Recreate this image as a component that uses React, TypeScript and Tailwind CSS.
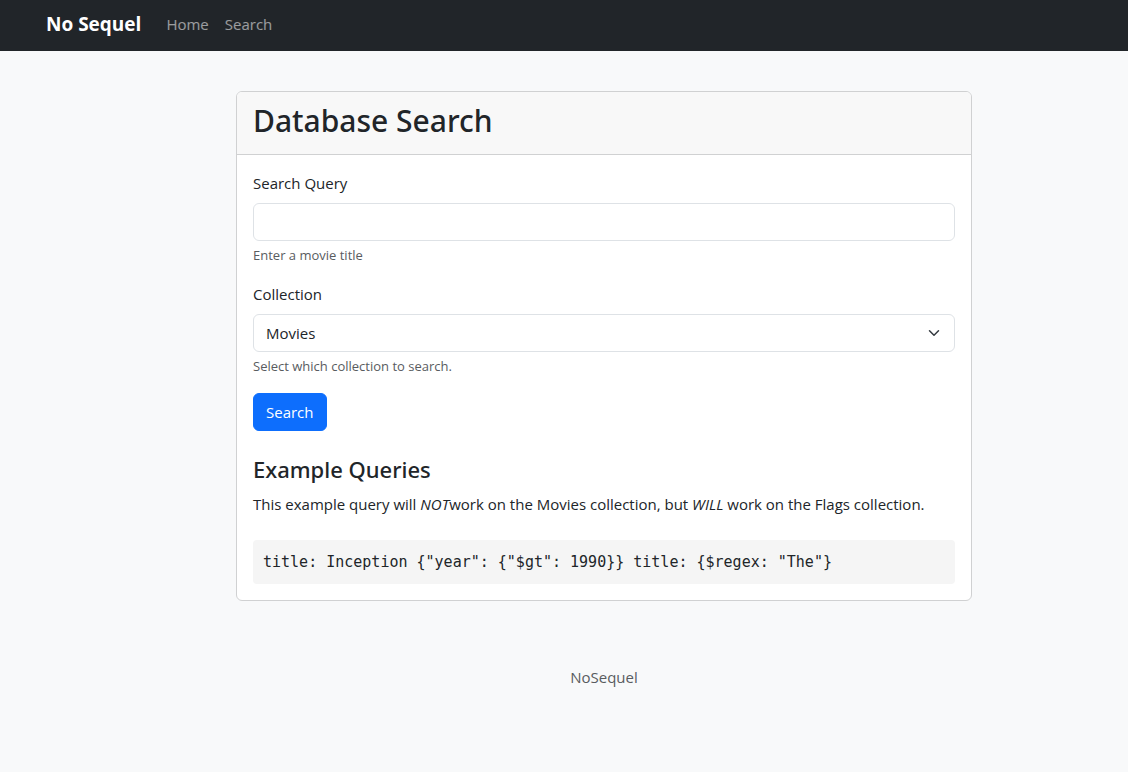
export default function App() {
  return (
    <div className="flex min-h-screen flex-col bg-[#f8f9fa] font-['Segoe_UI','Open_Sans',sans-serif] text-[15px] leading-6 text-[#212529]">
      <nav className="flex h-[51px] items-center bg-[#212529] pb-1 pl-[46px]">
        <a href="#" className="mr-[25px] text-[19px] font-bold text-white">No Sequel</a>
        <div className="flex gap-4 text-white/55">
          <a href="#">Home</a>
          <a href="#">Search</a>
        </div>
      </nav>
      <div className="ml-20 flex flex-col items-center px-4 pt-10">
        <main className="w-full max-w-[736px] overflow-hidden rounded-md border border-[#d0d1d2] bg-white">
          <header className="border-b border-[#d0d1d2] bg-[#f8f8f8] px-4 pt-2.5 pb-3.5">
            <h1 className="font-['Segoe_UI','Noto_Sans',sans-serif] text-[30px] leading-[38px] font-medium">Database Search</h1>
          </header>
          <div className="p-4">
            <form onSubmit={(e) => e.preventDefault()}>
              <label htmlFor="query" className="mb-2 block">Search Query</label>
              <input id="query" type="text" className="block h-[38px] w-full rounded-md border border-[#dee2e6] bg-white px-3" />
              <p className="mt-1 mb-4 text-[13px] leading-[21px] text-[#595c5f]">Enter a movie title</p>
              <label htmlFor="collection" className="mb-2 block">Collection</label>
              <div className="relative">
                <select id="collection" className="block h-[38px] w-full appearance-none rounded-md border border-[#dee2e6] bg-white px-3">
                  <option>Movies</option>
                  <option>Flags</option>
                </select>
                <svg viewBox="0 0 16 16" className="pointer-events-none absolute top-[13px] right-[13px] h-3 w-4" fill="none" stroke="#343a40" strokeWidth="2" strokeLinecap="round" strokeLinejoin="round">
                  <path d="m2 5 6 6 6-6" />
                </svg>
              </div>
              <p className="mt-1 mb-4 text-[13px] leading-[21px] text-[#595c5f]">Select which collection to search.</p>
              <button type="submit" className="block h-[38px] rounded-md border border-[#0d6efd] bg-[#0d6efd] px-3 text-white">Search</button>
            </form>
            <h2 className="mt-6 mb-2 font-['Segoe_UI','Noto_Sans',sans-serif] text-[22px] leading-[29px] font-medium">Example Queries</h2>
            <p>This example query will <em>NOT</em>work on the Movies collection, but <em>WILL</em> work on the Flags collection.</p>
            <pre className="mt-6 overflow-x-auto rounded bg-[#f5f5f5] p-2.5 font-['DejaVu_Sans_Mono',monospace] text-[15px] leading-6">{'title: Inception {"year": {"$gt": 1990}} title: {$regex: "The"}'}</pre>
          </div>
        </main>
        <footer className="py-16 text-[#595c5f]">NoSequel</footer>
      </div>
    </div>
  );
}
